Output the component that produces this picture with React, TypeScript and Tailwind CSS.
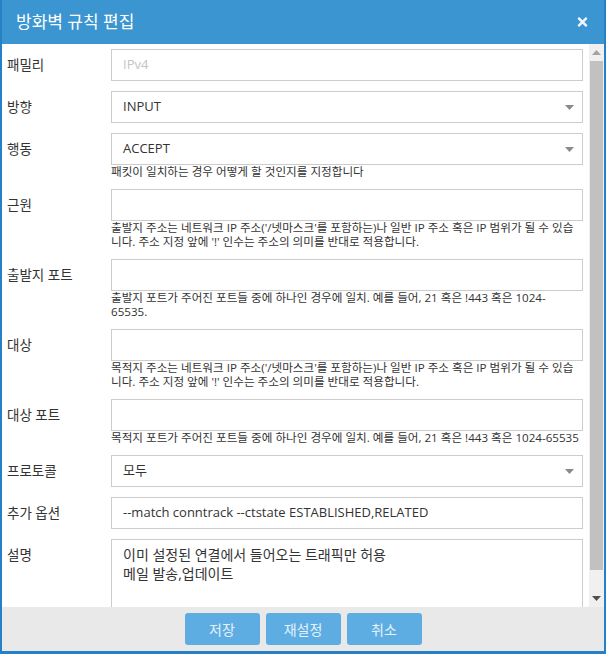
import { FC } from "react";
import { FaTimes } from "react-icons/fa";

interface Field {
    label: string;
    kind: "text" | "select";
    value?: string;
    muted?: boolean;
    help?: string[];
}

const fields: Field[] = [
    { label: "패밀리", kind: "text", value: "IPv4", muted: true },
    { label: "방향", kind: "select", value: "INPUT" },
    { label: "행동", kind: "select", value: "ACCEPT", help: ["패킷이 일치하는 경우 어떻게 할 것인지를 지정합니다"] },
    {
        label: "근원",
        kind: "text",
        help: [
            "출발지 주소는 네트워크 IP 주소('/넷마스크'를 포함하는)나 일반 IP 주소 혹은 IP 범위가 될 수 있습",
            "니다. 주소 지정 앞에 '!' 인수는 주소의 의미를 반대로 적용합니다.",
        ],
    },
    {
        label: "출발지 포트",
        kind: "text",
        help: ["출발지 포트가 주어진 포트들 중에 하나인 경우에 일치. 예를 들어, 21 혹은 !443 혹은 1024-", "65535."],
    },
    {
        label: "대상",
        kind: "text",
        help: [
            "목적지 주소는 네트워크 IP 주소('/넷마스크'를 포함하는)나 일반 IP 주소 혹은 IP 범위가 될 수 있습",
            "니다. 주소 지정 앞에 '!' 인수는 주소의 의미를 반대로 적용합니다.",
        ],
    },
    {
        label: "대상 포트",
        kind: "text",
        help: ["목적지 포트가 주어진 포트들 중에 하나인 경우에 일치. 예를 들어, 21 혹은 !443 혹은 1024-65535"],
    },
    { label: "프로토콜", kind: "select", value: "모두" },
    { label: "추가 옵션", kind: "text", value: "--match conntrack --ctstate ESTABLISHED,RELATED" },
];

const Caret: FC<{ up?: boolean; color: string }> = ({ up, color }) => (
    <svg width="9" height="5" viewBox="0 0 9 5">
        <path d={up ? "M0 5 L4.5 0 L9 5 Z" : "M0 0 L9 0 L4.5 5 Z"} fill={color} />
    </svg>
);

const Row: FC<{ field: Field }> = ({ field }) => (
    <div className="flex">
        <label className="w-[104px] h-8 flex items-center text-[13.5px] text-[#333] shrink-0">{field.label}</label>
        <div className="flex-1 min-w-0">
            <div className="h-8 border border-[#cccccc] bg-white flex items-center pl-[11px] pr-[8px]">
                <span className={`flex-1 text-[13px] whitespace-nowrap ${field.muted ? "text-[#c4c4c4]" : "text-[#333]"}`}>
                    {field.value}
                </span>
                {field.kind === "select" && <Caret color="#8a8a8a" />}
            </div>
            {field.help && (
                <div className="text-[11.6px] leading-[14px] text-[#333]">
                    {field.help.map((line, i) => (
                        <div key={i} className="whitespace-nowrap">{line}</div>
                    ))}
                </div>
            )}
        </div>
    </div>
);

const App: FC = () => {
    return (
        <div className="w-[607px] h-[654px] bg-white font-['Open_Sans','Noto_Sans_CJK_KR',sans-serif]">
            <div className="w-[606px] h-[654px] flex flex-col border-l-2 border-r-2 border-b-[3px] border-[#2580c8]">
                <div className="h-[44px] bg-[#3b95d0] flex items-center justify-between pl-[14px] pr-[15px] shrink-0">
                    <h2 className="text-white text-[17px]">방화벽 규칙 편집</h2>
                    <FaTimes className="text-[#eef5fb] w-[13px] h-[14px]" />
                </div>
                <div className="flex flex-1 min-h-0">
                    <div className="flex-1 overflow-hidden pt-[5px] pl-[5px] pr-[6px] flex flex-col gap-[10px]">
                        {fields.map((f) => (
                            <Row key={f.label} field={f} />
                        ))}
                        <div className="flex">
                            <label className="w-[104px] h-8 flex items-center text-[13.5px] text-[#333] shrink-0">설명</label>
                            <div className="flex-1 h-[100px] border border-[#cccccc] px-[11px] pt-[5px] text-[14px] leading-[19px] text-[#333] shrink-0">
                                <div>이미 설정된 연결에서 들어오는 트래픽만 허용</div>
                                <div>메일 발송,업데이트</div>
                            </div>
                        </div>
                    </div>
                    <div className="w-[15px] bg-[#f0f0f0] flex flex-col items-center shrink-0">
                        <div className="h-[17px] flex items-center justify-center">
                            <Caret up color="#a3a3a3" />
                        </div>
                        <div className="flex-1 w-full px-[1px]">
                            <div className="h-[509px] bg-[#c1c1c1]" />
                        </div>
                        <div className="h-[17px] flex items-center justify-center">
                            <Caret color="#505050" />
                        </div>
                    </div>
                </div>
                <div className="h-[44px] bg-[#e9e9e9] flex items-center justify-center gap-[6px] shrink-0">
                    {["저장", "재설정", "취소"].map((b) => (
                        <button key={b} className="w-[75px] h-8 rounded-[3px] bg-[#5dade2] text-[#e6f1fa] text-[14px]">
                            {b}
                        </button>
                    ))}
                </div>
            </div>
        </div>
    );
};

export default App;
